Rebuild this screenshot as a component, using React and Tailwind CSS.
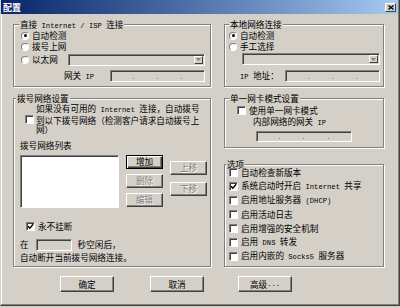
import React from "react";

const sunken =
  "border border-t-[#808080] border-l-[#808080] border-r-white border-b-white shadow-[inset_1px_1px_0_#404040]";

// half-width latin text, like the dialog's system font
function L({ children }) {
  return <span className="font-['Liberation_Mono',monospace] text-[7.2px] whitespace-pre">{children}</span>;
}

function Radio({ checked }) {
  return (
    <span className="inline-flex h-[8px] w-[8px] shrink-0 items-center justify-center rounded-full border border-t-[#808080] border-l-[#808080] border-r-white border-b-white bg-white">
      {checked && <span className="h-[3px] w-[3px] rounded-full bg-black" />}
    </span>
  );
}

function Check({ checked }) {
  return (
    <span className={`inline-flex h-[9px] w-[9px] shrink-0 items-center justify-center bg-white ${sunken}`}>
      {checked && (
        <svg width="7" height="7" viewBox="0 0 7 7">
          <path d="M1 3.2 L2.8 5.2 L6.2 1.2" stroke="#000" strokeWidth="1.4" fill="none" />
        </svg>
      )}
    </span>
  );
}

function Btn({ children, disabled, primary, className = "" }) {
  const frame = primary
    ? "border border-black shadow-[inset_1px_1px_0_#fff,inset_-1px_-1px_0_#404040,inset_-2px_-2px_0_#808080]"
    : "border border-t-white border-l-white border-r-[#404040] border-b-[#404040] shadow-[inset_-1px_-1px_0_#808080]";
  return (
    <div
      className={`flex items-center justify-center bg-[#d4d0c8] ${frame} ${
        disabled ? "text-[#808080] [text-shadow:1px_1px_0_#fff]" : "text-black"
      } ${className}`}
    >
      {children}
    </div>
  );
}

function Combo({ className = "" }) {
  return (
    <div className={`flex h-[12px] bg-[#d4d0c8] ${sunken} ${className}`}>
      <div className="flex-1" />
      <div className="m-[1px] flex w-[9px] items-center justify-center border border-t-white border-l-white border-r-[#404040] border-b-[#404040] bg-[#d4d0c8]">
        <svg width="5" height="3" viewBox="0 0 5 3">
          <path d="M0 0 H5 L2.5 3 Z" fill="#808080" />
        </svg>
      </div>
    </div>
  );
}

function IpBox({ className = "" }) {
  return (
    <div className={`flex items-end justify-around bg-[#d4d0c8] px-[10px] pb-[2px] ${sunken} ${className}`}>
      <span className="h-[1px] w-[1px] bg-[#808080]" />
      <span className="h-[1px] w-[1px] bg-[#808080]" />
      <span className="h-[1px] w-[1px] bg-[#808080]" />
    </div>
  );
}

function Group({ title, legendClass = "", className = "", children }) {
  return (
    <fieldset
      className={`w-full min-w-0 border border-[#808080] shadow-[1px_1px_0_#fff,inset_1px_1px_0_#fff] ${className}`}
    >
      <legend className={`h-[11px] whitespace-nowrap bg-[#d4d0c8] px-[1px] leading-[11px] ${legendClass}`}>{title}</legend>
      {children}
    </fieldset>
  );
}

const options = [
  [<>自动检查新版本</>, false],
  [<>系统启动时开启<L> Internet </L>共享</>, true],
  [<>启用地址服务器<L> (DHCP)</L></>, false],
  [<>启用活动日志</>, false],
  [<>启用增强的安全机制</>, false],
  [<>启用<L> DNS </L>转发</>, false],
  [<>启用内嵌的<L> Socks5 </L>服务器</>, false],
];

export default function App() {
  return (
    <div className="h-[308px] w-[400px] bg-[#d4d0c8] font-['Noto_Sans_CJK_SC',sans-serif] text-[8.6px] leading-[11px] text-black">
      <div className="flex h-[306px] w-[400px] flex-col border-l border-r border-b border-l-[#d4d0c8] border-r-[#404040] border-b-[#404040] bg-[#d4d0c8] shadow-[inset_-1px_-1px_0_#808080,inset_1px_0_0_#fff]">
        {/* title bar */}
        <div className="mr-[1px] flex h-[14px] items-center justify-between bg-linear-to-r from-[#0a246a] to-[#a6caf0] pl-[2px] pr-[2px]">
          <span className="text-[9px] font-bold text-white">配置</span>
          <div className="flex h-[9px] w-[11px] items-center justify-center border border-t-white border-l-white border-r-[#404040] border-b-[#404040] bg-[#d4d0c8]">
            <svg width="6" height="5" viewBox="0 0 6 5">
              <path d="M0.5 0.5 L5.5 4.5 M5.5 0.5 L0.5 4.5" stroke="#000" strokeWidth="1.3" />
            </svg>
          </div>
        </div>

        {/* body */}
        <div className="flex gap-[13px] pl-[12px] pt-[5px]">
          {/* left column */}
          <div className="flex w-[198px] flex-col">
            <Group
              title={<>直接<L> Internet / ISP </L>连接</>}
              legendClass="ml-[5px]"
              className="h-[68px]"
            >
              <div className="flex h-[11px] items-center pl-[7px]">
                <Radio checked />
                <span className="ml-[3px]">自动检测</span>
              </div>
              <div className="flex h-[11px] items-center pl-[7px]">
                <Radio />
                <span className="ml-[3px]">拨号上网</span>
              </div>
              <div className="mt-[1px] flex h-[13px] items-center pl-[7px]">
                <Radio />
                <span className="ml-[3px]">以太网</span>
                <Combo className="ml-auto mr-[5px] w-[137px]" />
              </div>
              <div className="mt-[4px] flex h-[12px] items-center pl-[50px]">
                <span>网关<L> IP</L></span>
                <IpBox className="ml-auto mr-[5px] h-[12px] w-[95px]" />
              </div>
            </Group>

            <Group title="拨号网络设置" legendClass="ml-[2px]" className="mt-[6px] h-[174px]">
              <div className="flex items-center pl-[11px]">
                <Check />
                <div className="ml-[2px] whitespace-nowrap leading-[9.5px]">
                  <div>如果没有可用的<L> Internet </L>连接，自动拨号</div>
                  <div>到以下拨号网络（检测客户请求自动拨号上</div>
                  <div>网）</div>
                </div>
              </div>
              <div className="mt-[5.5px] h-[11px] pl-[6px]">拨号网络列表</div>
              <div className="mt-[3.5px] flex pl-[6px]">
                <div className={`h-[53px] w-[99px] bg-white ${sunken}`} />
                <div className="ml-[7px] flex flex-col">
                  <Btn primary className="h-[14px] w-[37px]">增加</Btn>
                  <Btn disabled className="mt-[5px] h-[14px] w-[37px]">删除</Btn>
                  <Btn disabled className="mt-[5px] h-[14px] w-[37px]">编辑</Btn>
                </div>
                <div className="ml-[7px] flex flex-col pt-[6px]">
                  <Btn disabled className="h-[14px] w-[37px]">上移</Btn>
                  <Btn disabled className="mt-[7px] h-[14px] w-[37px]">下移</Btn>
                </div>
              </div>
              <div className="mt-[13px] flex h-[11px] items-center pl-[12px]">
                <Check checked />
                <span className="ml-[3px]">永不挂断</span>
              </div>
              <div className="mt-[7px] flex h-[12px] items-center pl-[6px]">
                <span>在</span>
                <div className={`ml-[7px] h-[12px] w-[36px] bg-[#d4d0c8] ${sunken}`} />
                <span className="ml-[6px]">秒空闲后，</span>
              </div>
              <div className="mt-[1.5px] h-[11px] pl-[6px]">自动断开当前拨号网络连接。</div>
            </Group>
          </div>

          {/* right column */}
          <div className="flex w-[160px] flex-col">
            <Group title="本地网络连接" legendClass="ml-[4px]" className="h-[68px]">
              <div className="flex h-[11px] items-center pl-[4px]">
                <Radio checked />
                <span className="ml-[3px]">自动检测</span>
              </div>
              <div className="flex h-[11px] items-center pl-[4px]">
                <Radio />
                <span className="ml-[3px]">手工选择</span>
              </div>
              <div className="mt-[1px] flex h-[12px] pl-[17px]">
                <Combo className="w-[138px]" />
              </div>
              <div className="mt-[5px] flex h-[12px] items-center pl-[15px]">
                <span><L>IP </L>地址：</span>
                <IpBox className="ml-auto mr-[3px] h-[12px] w-[95px]" />
              </div>
            </Group>

            <Group title="单一网卡模式设置" legendClass="ml-[4px]" className="mt-[6px] h-[55px]">
              <div className="mt-[0.5px] flex h-[11px] items-center pl-[12px]">
                <Check />
                <span className="ml-[3px]">使用单一网卡模式</span>
              </div>
              <div className="h-[11px] pl-[28px]">内部网络的网关<L> IP</L></div>
              <IpBox className="ml-[31px] mt-[4px] h-[11px] w-[96px]" />
            </Group>

            <Group title="选项" legendClass="ml-[1px]" className="mt-[10.5px] h-[108.5px]">
              <div className="-mt-[4px] flex flex-col">
                {options.map(([label, on], i) => (
                  <div key={i} className="flex h-[14px] items-center pl-[4px]">
                    <Check checked={on} />
                    <span className="ml-[3px] whitespace-nowrap">{label}</span>
                  </div>
                ))}
              </div>
            </Group>
          </div>
        </div>

        {/* bottom buttons */}
        <div className="mt-[9px] flex pl-[59px]">
          <Btn className="h-[16px] w-[54px]">确定</Btn>
          <Btn className="ml-[36px] h-[16px] w-[54px]">取消</Btn>
          <Btn className="ml-[34px] h-[16px] w-[54px]">高级<L>...</L></Btn>
        </div>
      </div>
    </div>
  );
}
